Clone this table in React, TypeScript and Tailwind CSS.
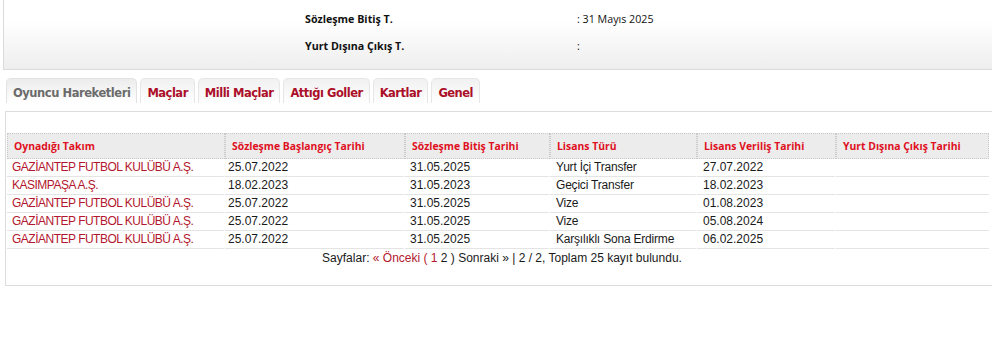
import React from "react";

type Row = {
  team: string;
  start: string;
  end: string;
  type: string;
  issued: string;
  abroad: string;
};

const rows: Row[] = [
  { team: "GAZİANTEP FUTBOL KULÜBÜ A.Ş.", start: "25.07.2022", end: "31.05.2025", type: "Yurt İçi Transfer", issued: "27.07.2022", abroad: "" },
  { team: "KASIMPAŞA A.Ş.", start: "18.02.2023", end: "31.05.2023", type: "Geçici Transfer", issued: "18.02.2023", abroad: "" },
  { team: "GAZİANTEP FUTBOL KULÜBÜ A.Ş.", start: "25.07.2022", end: "31.05.2025", type: "Vize", issued: "01.08.2023", abroad: "" },
  { team: "GAZİANTEP FUTBOL KULÜBÜ A.Ş.", start: "25.07.2022", end: "31.05.2025", type: "Vize", issued: "05.08.2024", abroad: "" },
  { team: "GAZİANTEP FUTBOL KULÜBÜ A.Ş.", start: "25.07.2022", end: "31.05.2025", type: "Karşılıklı Sona Erdirme", issued: "06.02.2025", abroad: "" },
];

const columns = [
  { label: "Oynadığı Takım", width: "w-[218px]" },
  { label: "Sözleşme Başlangıç Tarihi", width: "w-[180px]" },
  { label: "Sözleşme Bitiş Tarihi", width: "w-[145px]" },
  { label: "Lisans Türü", width: "w-[147px]" },
  { label: "Lisans Veriliş Tarihi", width: "w-[139px]" },
  { label: "Yurt Dışına Çıkış Tarihi", width: "w-[153px]" },
];

const tabs = [
  { label: "Oyuncu Hareketleri", active: true },
  { label: "Maçlar" },
  { label: "Milli Maçlar" },
  { label: "Attığı Goller" },
  { label: "Kartlar" },
  { label: "Genel" },
];

const info = [
  { label: "Sözleşme Başlangıç T.", value: ": 25 Temmuz 2022" },
  { label: "Sözleşme Bitiş T.", value: ": 31 Mayıs 2025" },
  { label: "Yurt Dışına Çıkış T.", value: ":" },
];

const cell = "border-b border-r-2 border-b-[#e4e4e4] border-r-white text-[#1a1a1a]";

export default function App() {
  return (
    <div className="h-[356px] w-[992px] overflow-hidden bg-white font-['Liberation_Sans',Arial,sans-serif]">
      {/* player summary panel */}
      <div className="ml-[3px] h-[70px] overflow-hidden border-b border-l border-[#dadada] bg-gradient-to-b from-white from-[30%] to-[#eeeeee]">
        <div className="mt-[-21px] font-['Open_Sans',sans-serif] text-[10.7px] text-[#111]">
          {info.map((item) => (
            <div key={item.label} className="flex h-[27px] items-center">
              <span className="ml-[301px] w-[272px] font-bold">{item.label}</span>
              <span>{item.value}</span>
            </div>
          ))}
        </div>
      </div>

      {/* tabs */}
      <div className="mt-[8px] flex gap-[3px] pl-[6px]">
        {tabs.map((tab) => (
          <div
            key={tab.label}
            className={
              tab.active
                ? "flex h-[25px] items-end rounded-t-[5px] border-x border-t border-[#e2e2e2] bg-gradient-to-b from-[#ececec] to-white px-[6px] pb-[1px] font-['DejaVu_Sans',sans-serif] text-[11.5px] font-bold tracking-[-0.45px] text-[#6b6b6b]"
                : "flex h-[25px] items-end rounded-t-[5px] border-x border-t border-[#e6e6e6] bg-gradient-to-b from-[#f1f1f1] to-white px-[6px] pb-[1px] font-['DejaVu_Sans',sans-serif] text-[11.5px] font-bold tracking-[-0.5px] text-[#ab0f29]"
            }
          >
            {tab.label}
          </div>
        ))}
      </div>

      {/* content box */}
      <div className="ml-[5px] mt-[8px] h-[175px] border-y border-l border-[#dddddd] pl-[1px] pt-[21px]">
        <table className="table-fixed border-separate border-spacing-0 text-[12px] leading-[17px]">
          <thead>
            <tr>
              {columns.map((col) => (
                <th
                  key={col.label}
                  className={`${col.width} h-[26px] border border-dotted border-[#c9c9c9] bg-[#ececec] pl-[6px] text-left font-['Open_Sans',sans-serif] text-[10.4px] font-bold text-[#e0101e]`}
                >
                  {col.label}
                </th>
              ))}
            </tr>
          </thead>
          <tbody>
            {rows.map((row, i) => (
              <tr key={i}>
                <td className={`h-[17px] pl-[5px] tracking-[-0.5px] ${cell} text-[#b3172d]`}>{row.team}</td>
                <td className={`pl-[3px] ${cell}`}>{row.start}</td>
                <td className={`pl-[5px] ${cell}`}>{row.end}</td>
                <td className={`pl-[6px] tracking-[-0.2px] ${cell}`}>{row.type}</td>
                <td className={`pl-[6px] ${cell}`}>{row.issued}</td>
                <td className="border-b border-b-[#e4e4e4] pl-[6px] text-[#1a1a1a]">{row.abroad}</td>
              </tr>
            ))}
            <tr>
              <td colSpan={6} className="h-[18px] pl-[8px] text-center text-[#1a1a1a]">
                Sayfalar: <span className="text-[#b3172d]">« Önceki ( 1</span> 2 ) Sonraki » | 2 / 2, Toplam 25 kayıt bulundu.
              </td>
            </tr>
          </tbody>
        </table>
      </div>
    </div>
  );
}
